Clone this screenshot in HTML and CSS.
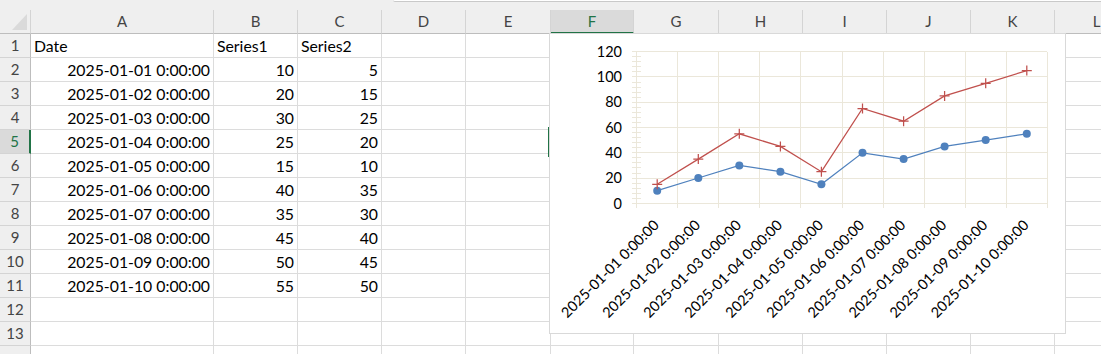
FILE: index.html
```html
<!DOCTYPE html>
<html lang="en">
<head>
  <meta charset="UTF-8">
  <title>Sheet1</title>
  <link rel="stylesheet" href="styles.css">
</head>
<body>

  <div class="topbar"><div class="fbar"></div></div>

  <div class="sheet">
    <div class="row head">
      <div class="corner"></div>
      <div class="col">A</div><div class="col">B</div><div class="col">C</div><div class="col">D</div>
      <div class="col">E</div><div class="col active">F</div><div class="col">G</div><div class="col">H</div>
      <div class="col">I</div><div class="col">J</div><div class="col">K</div><div class="col">L</div>
    </div>

    <div class="row">
      <div class="num">1</div>
      <div class="cell">Date</div><div class="cell">Series1</div><div class="cell">Series2</div>
      <div class="cell"></div><div class="cell"></div><div class="cell"></div><div class="cell"></div>
      <div class="cell"></div><div class="cell"></div><div class="cell"></div><div class="cell"></div><div class="cell"></div>
    </div>
    <div class="row">
      <div class="num">2</div>
      <div class="cell r">2025-01-01 0:00:00</div><div class="cell r">10</div><div class="cell r">5</div>
      <div class="cell"></div><div class="cell"></div><div class="cell"></div><div class="cell"></div>
      <div class="cell"></div><div class="cell"></div><div class="cell"></div><div class="cell"></div><div class="cell"></div>
    </div>
    <div class="row">
      <div class="num">3</div>
      <div class="cell r">2025-01-02 0:00:00</div><div class="cell r">20</div><div class="cell r">15</div>
      <div class="cell"></div><div class="cell"></div><div class="cell"></div><div class="cell"></div>
      <div class="cell"></div><div class="cell"></div><div class="cell"></div><div class="cell"></div><div class="cell"></div>
    </div>
    <div class="row">
      <div class="num">4</div>
      <div class="cell r">2025-01-03 0:00:00</div><div class="cell r">30</div><div class="cell r">25</div>
      <div class="cell"></div><div class="cell"></div><div class="cell"></div><div class="cell"></div>
      <div class="cell"></div><div class="cell"></div><div class="cell"></div><div class="cell"></div><div class="cell"></div>
    </div>
    <div class="row">
      <div class="num active">5</div>
      <div class="cell r">2025-01-04 0:00:00</div><div class="cell r">25</div><div class="cell r">20</div>
      <div class="cell"></div><div class="cell"></div><div class="cell sel"></div><div class="cell"></div>
      <div class="cell"></div><div class="cell"></div><div class="cell"></div><div class="cell"></div><div class="cell"></div>
    </div>
    <div class="row">
      <div class="num">6</div>
      <div class="cell r">2025-01-05 0:00:00</div><div class="cell r">15</div><div class="cell r">10</div>
      <div class="cell"></div><div class="cell"></div><div class="cell"></div><div class="cell"></div>
      <div class="cell"></div><div class="cell"></div><div class="cell"></div><div class="cell"></div><div class="cell"></div>
    </div>
    <div class="row">
      <div class="num">7</div>
      <div class="cell r">2025-01-06 0:00:00</div><div class="cell r">40</div><div class="cell r">35</div>
      <div class="cell"></div><div class="cell"></div><div class="cell"></div><div class="cell"></div>
      <div class="cell"></div><div class="cell"></div><div class="cell"></div><div class="cell"></div><div class="cell"></div>
    </div>
    <div class="row">
      <div class="num">8</div>
      <div class="cell r">2025-01-07 0:00:00</div><div class="cell r">35</div><div class="cell r">30</div>
      <div class="cell"></div><div class="cell"></div><div class="cell"></div><div class="cell"></div>
      <div class="cell"></div><div class="cell"></div><div class="cell"></div><div class="cell"></div><div class="cell"></div>
    </div>
    <div class="row">
      <div class="num">9</div>
      <div class="cell r">2025-01-08 0:00:00</div><div class="cell r">45</div><div class="cell r">40</div>
      <div class="cell"></div><div class="cell"></div><div class="cell"></div><div class="cell"></div>
      <div class="cell"></div><div class="cell"></div><div class="cell"></div><div class="cell"></div><div class="cell"></div>
    </div>
    <div class="row">
      <div class="num">10</div>
      <div class="cell r">2025-01-09 0:00:00</div><div class="cell r">50</div><div class="cell r">45</div>
      <div class="cell"></div><div class="cell"></div><div class="cell"></div><div class="cell"></div>
      <div class="cell"></div><div class="cell"></div><div class="cell"></div><div class="cell"></div><div class="cell"></div>
    </div>
    <div class="row">
      <div class="num">11</div>
      <div class="cell r">2025-01-10 0:00:00</div><div class="cell r">55</div><div class="cell r">50</div>
      <div class="cell"></div><div class="cell"></div><div class="cell"></div><div class="cell"></div>
      <div class="cell"></div><div class="cell"></div><div class="cell"></div><div class="cell"></div><div class="cell"></div>
    </div>
    <div class="row">
      <div class="num">12</div>
      <div class="cell"></div><div class="cell"></div><div class="cell"></div>
      <div class="cell"></div><div class="cell"></div><div class="cell"></div><div class="cell"></div>
      <div class="cell"></div><div class="cell"></div><div class="cell"></div><div class="cell"></div><div class="cell"></div>
    </div>
    <div class="row">
      <div class="num">13</div>
      <div class="cell"></div><div class="cell"></div><div class="cell"></div>
      <div class="cell"></div><div class="cell"></div><div class="cell"></div><div class="cell"></div>
      <div class="cell"></div><div class="cell"></div><div class="cell"></div><div class="cell"></div><div class="cell"></div>
    </div>
    <div class="row">
      <div class="num"></div>
      <div class="cell"></div><div class="cell"></div><div class="cell"></div>
      <div class="cell"></div><div class="cell"></div><div class="cell"></div><div class="cell"></div>
      <div class="cell"></div><div class="cell"></div><div class="cell"></div><div class="cell"></div><div class="cell"></div>
    </div>
  </div>

  <!-- embedded line chart, floats over D1:K13 -->
  <div class="chart">
    <svg width="515" height="299" viewBox="550 34 515 299">
      <g class="grid">
        <path d="M632 51.7H1047.3 M632 76.9H1047.3 M632 102.2H1047.3 M632 127.5H1047.3 M632 152.8H1047.3 M632 178H1047.3 M632 203.3H1047.3"/>
        <path d="M636.7 51.7V208.3 M677.8 51.7V208.3 M718.8 51.7V208.3 M759.9 51.7V208.3 M800.9 51.7V208.3 M842 51.7V208.3 M883.1 51.7V208.3 M924.1 51.7V208.3 M965.2 51.7V208.3 M1006.2 51.7V208.3 M1047.3 51.7V208.3"/>
        <path d="M632 198.2H641 M632 193.2H641 M632 188.1H641 M632 183.1H641
                 M632 173H641 M632 167.9H641 M632 162.9H641 M632 157.8H641
                 M632 147.7H641 M632 142.6H641 M632 137.6H641 M632 132.5H641
                 M632 122.4H641 M632 117.4H641 M632 112.3H641 M632 107.3H641
                 M632 97.2H641 M632 92.1H641 M632 87H641 M632 82H641
                 M632 71.9H641 M632 66.8H641 M632 61.8H641 M632 56.7H641"/>
      </g>

      <g class="ylab">
        <text x="622" y="56.9">120</text>
        <text x="622" y="82.1">100</text>
        <text x="622" y="107.4">80</text>
        <text x="622" y="132.7">60</text>
        <text x="622" y="158">40</text>
        <text x="622" y="183.2">20</text>
        <text x="622" y="208.5">0</text>
      </g>

      <polyline class="s1" points="657.2,190.7 698.3,178 739.3,165.4 780.4,171.7 821.4,184.3 862.5,152.8 903.6,159.1 944.6,146.4 985.7,140.1 1026.8,133.8"/>
      <polyline class="s2" points="657.2,184.3 698.3,159.1 739.3,133.8 780.4,146.4 821.4,171.7 862.5,108.5 903.6,121.2 944.6,95.9 985.7,83.3 1026.8,70.6"/>

      <g class="dots">
        <circle cx="657.2" cy="190.7" r="4"/><circle cx="698.3" cy="178" r="4"/>
        <circle cx="739.3" cy="165.4" r="4"/><circle cx="780.4" cy="171.7" r="4"/>
        <circle cx="821.4" cy="184.3" r="4"/><circle cx="862.5" cy="152.8" r="4"/>
        <circle cx="903.6" cy="159.1" r="4"/><circle cx="944.6" cy="146.4" r="4"/>
        <circle cx="985.7" cy="140.1" r="4"/><circle cx="1026.8" cy="133.8" r="4"/>
      </g>
      <path class="plus" d="M652.2 184.3h10m-5 -5v10 M693.3 159.1h10m-5 -5v10 M734.3 133.8h10m-5 -5v10
                            M775.4 146.4h10m-5 -5v10 M816.4 171.7h10m-5 -5v10 M857.5 108.5h10m-5 -5v10
                            M898.6 121.2h10m-5 -5v10 M939.6 95.9h10m-5 -5v10 M980.7 83.3h10m-5 -5v10
                            M1021.8 70.6h10m-5 -5v10"/>

      <g class="xlab">
        <text transform="translate(660 226) rotate(-45)">2025-01-01 0:00:00</text>
        <text transform="translate(701.1 226) rotate(-45)">2025-01-02 0:00:00</text>
        <text transform="translate(742.1 226) rotate(-45)">2025-01-03 0:00:00</text>
        <text transform="translate(783.2 226) rotate(-45)">2025-01-04 0:00:00</text>
        <text transform="translate(824.2 226) rotate(-45)">2025-01-05 0:00:00</text>
        <text transform="translate(865.3 226) rotate(-45)">2025-01-06 0:00:00</text>
        <text transform="translate(906.4 226) rotate(-45)">2025-01-07 0:00:00</text>
        <text transform="translate(947.4 226) rotate(-45)">2025-01-08 0:00:00</text>
        <text transform="translate(988.5 226) rotate(-45)">2025-01-09 0:00:00</text>
        <text transform="translate(1029.6 226) rotate(-45)">2025-01-10 0:00:00</text>
      </g>
    </svg>
  </div>

</body>
</html>
```

FILE: styles.css
```css
body {
  margin: 0;
  font-family: Lato, 'Liberation Sans', sans-serif;
  font-size: 15.8px;
  color: #000;
  background: #fff;
  overflow: hidden;
}

.topbar {
  height: 10px;
  background: #efefef;
}

.fbar {
  margin-left: 393px;
  height: 1px;
  background: #fff;
  border-bottom: 1px solid #c9c9c9;
  border-bottom-left-radius: 3px;
}

.row {
  display: grid;
  grid-template-columns: 31px 183px 84px 84px 84px 85px 83px 85px 84px 84px 84px 84px 84px;
  height: 24px;
}

.row > div {
  box-sizing: border-box;
  border-right: 1px solid #dcdcdc;
  border-bottom: 1px solid #dcdcdc;
  line-height: 23px;
  white-space: nowrap;
  overflow: hidden;
}

.head > div {
  background: #efefef;
  color: #444;
  font-size: 15px;
  text-align: center;
  border-right-color: #d4d4d4;
  border-bottom-color: #bdbdbd;
}

.corner {
  position: relative;
}

.corner::after {
  content: "";
  position: absolute;
  left: 12px;
  top: 4px;
  width: 15px;
  height: 16px;
  background: #dadada;
  clip-path: polygon(100% 0, 100% 100%, 0 100%);
}

.head .col.active {
  background: #dadada;
  color: #217346;
  border-bottom: 2px solid #217346;
}

.num {
  background: #efefef;
  color: #444;
  font-size: 15px;
  text-align: center;
  border-right-color: #bdbdbd !important;
  border-bottom-color: #d4d4d4 !important;
}

.num.active {
  background: #dadada;
  color: #217346;
  border-right: 2px solid #217346 !important;
}

.cell {
  padding: 0 3px;
}

.cell.r {
  text-align: right;
}

.cell.sel {
  overflow: visible;
  outline: 2px solid #217346;
  outline-offset: 1px;
}

.chart {
  position: absolute;
  left: 549px;
  top: 33px;
  width: 517px;
  height: 301px;
  box-sizing: border-box;
  border: 1px solid #d9d9d9;
  background: #fff;
}

.chart svg {
  display: block;
}

.grid path {
  fill: none;
  stroke: #ebe7da;
  stroke-width: 1;
  shape-rendering: crispEdges;
}

.ylab text,
.xlab text {
  font-family: Lato, 'Liberation Sans', sans-serif;
  font-size: 14.5px;
  fill: #000;
  text-anchor: end;
}

.s1 {
  fill: none;
  stroke: #4f81bd;
  stroke-width: 1.25;
}

.s2 {
  fill: none;
  stroke: #c0504d;
  stroke-width: 1.25;
}

.dots circle {
  fill: #4f81bd;
}

.plus {
  fill: none;
  stroke: #c0504d;
  stroke-width: 1.25;
}
```
